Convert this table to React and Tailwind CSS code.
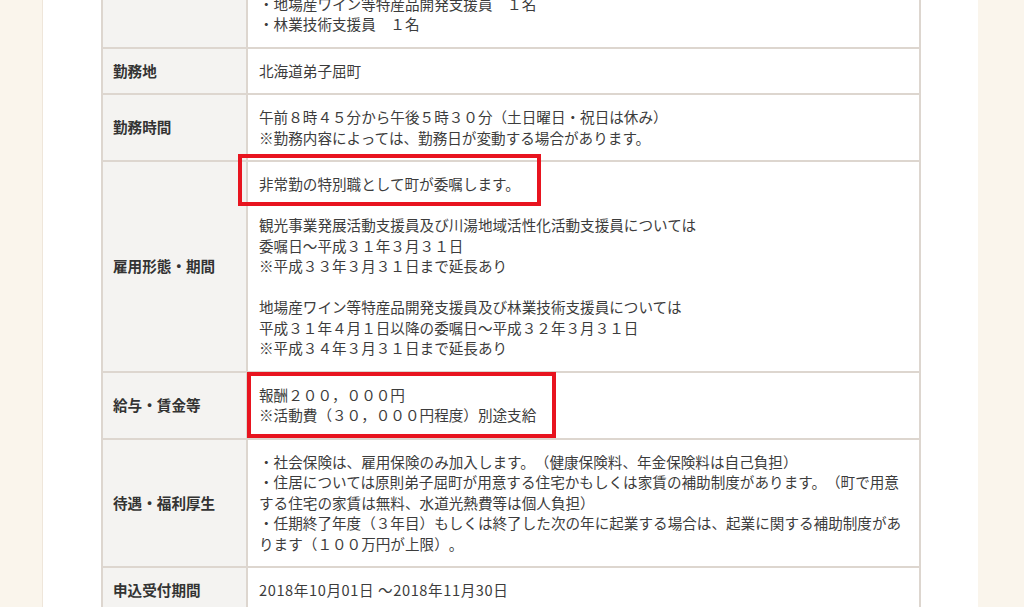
import React from "react";

// 募集要項テーブル（部分）
const font = { fontFamily: '"Noto Sans CJK JP", "Noto Sans", sans-serif' };

function Row({ label, children }) {
  return (
    <tr>
      <th className="w-[145px] bg-[#f4f3f1] border-2 border-[#ddd6cf] py-3 pl-[10px] pr-3 text-left align-middle font-bold text-[#333]">
        {label}
      </th>
      <td className="relative border-2 border-[#ddd6cf] bg-white py-3 pl-[11px] pr-3 align-top text-[#3c3c3c]">
        {children}
      </td>
    </tr>
  );
}

export default function App() {
  return (
    <div className="flex h-[607px] w-full overflow-hidden bg-[#faf5ec]" style={font}>
      <div className="ml-[42px] h-full w-[936px] overflow-hidden border-l border-[#efe6da] bg-white">
        <table className="ml-[58px] mt-[-82px] w-[820px] border-collapse text-[14.6px] leading-[20.5px] [text-spacing-trim:space-all]">
          <tbody>
            <Row label="募集人数">
              計４名
              <br />・観光事業発展活動支援員　１名
              <br />・川湯地域活性化活動支援員　１名
              <br />・地場産ワイン等特産品開発支援員　１名
              <br />・林業技術支援員　１名
            </Row>
            <Row label="勤務地">北海道弟子屈町</Row>
            <Row label="勤務時間">
              午前８時４５分から午後５時３０分（土日曜日・祝日は休み）
              <br />※勤務内容によっては、勤務日が変動する場合があります。
            </Row>
            <Row label="雇用形態・期間">
              {/* 注目箇所の赤枠 */}
              <div className="pointer-events-none absolute left-[-10px] top-[-8px] h-[52px] w-[303px] border-4 border-[#e8141f]" />
              非常勤の特別職として町が委嘱します。
              <br />
              <br />観光事業発展活動支援員及び川湯地域活性化活動支援員については
              <br />委嘱日～平成３１年３月３１日
              <br />※平成３３年３月３１日まで延長あり
              <br />
              <br />地場産ワイン等特産品開発支援員及び林業技術支援員については
              <br />平成３１年４月１日以降の委嘱日～平成３２年３月３１日
              <br />※平成３４年３月３１日まで延長あり
            </Row>
            <Row label="給与・賃金等">
              <div className="pointer-events-none absolute left-[-1px] top-[-1px] h-[66px] w-[309px] border-4 border-[#e8141f]" />
              報酬２００，０００円
              <br />※活動費（３０，０００円程度）別途支給
            </Row>
            <Row label="待遇・福利厚生">
              ・社会保険は、雇用保険のみ加入します。（健康保険料、年金保険料は自己負担）
              <br />・住居については原則弟子屈町が用意する住宅かもしくは家賃の補助制度があります。（町で用意
              <br />する住宅の家賃は無料、水道光熱費等は個人負担）
              <br />・任期終了年度（３年目）もしくは終了した次の年に起業する場合は、起業に関する補助制度があ
              <br />ります（１００万円が上限）。
            </Row>
            <Row label="申込受付期間">
              <span className="tracking-[0.6px]">2018年10月01日 ～2018年11月30日</span>
            </Row>
            <Row label="応募方法">
              所定の申込書に必要事項を記入のうえ、郵送または持参してください。
            </Row>
          </tbody>
        </table>
      </div>
    </div>
  );
}
